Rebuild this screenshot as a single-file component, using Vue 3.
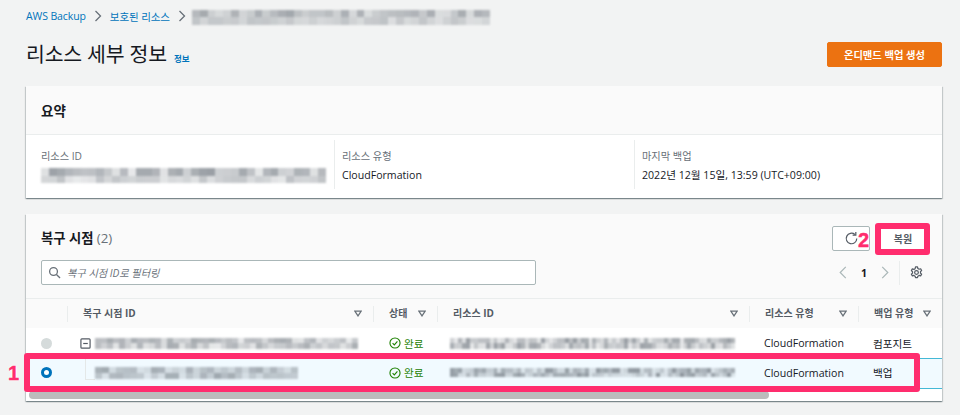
<script setup>
function mosaic(seed, width, cell, dark, light) {
  const cells = []
  let s = seed
  const count = Math.ceil(width / cell)
  for (let r = 0; r < 2; r++) {
    for (let c = 0; c < count; c++) {
      s = (s * 9301 + 49297) % 233280
      const v = s / 233280
      const fade = r === 0 ? dark : light
      cells.push(+(0.14 + v * fade).toFixed(2))
    }
  }
  return { cells, count }
}
const blurs = {
  crumb: mosaic(11, 298, 8, 0.42, 0.22),
  summary: mosaic(23, 285, 8, 0.5, 0.26),
  row1: mosaic(37, 263, 6, 0.42, 0.4),
  row2: mosaic(41, 203, 7, 0.42, 0.42),
  res1: mosaic(53, 285, 4, 0.5, 0.5),
  res2: mosaic(67, 285, 4, 0.55, 0.55)
}
const columns = [
  { label: '복구 시점 ID' },
  { label: '상태' },
  { label: '리소스 ID' },
  { label: '리소스 유형' },
  { label: '백업 유형' }
]
</script>

<template>
  <div class="page">
    <nav class="crumbs">
      <a class="link">AWS Backup</a>
      <svg class="sep" viewBox="0 0 8 12"><path d="M1.5 1 6.5 6 1.5 11" /></svg>
      <a class="link">보호된 리소스</a>
      <svg class="sep" viewBox="0 0 8 12"><path d="M1.5 1 6.5 6 1.5 11" /></svg>
      <div class="mosaic crumb-blur" :style="{ gridTemplateColumns: `repeat(${blurs.crumb.count}, 1fr)` }">
        <i v-for="(o, i) in blurs.crumb.cells" :key="i" :style="{ opacity: o }"></i>
      </div>
    </nav>

    <header class="title-row">
      <div class="title-left">
        <h1>리소스 세부 정보</h1>
        <a class="info">정보</a>
      </div>
      <button class="primary">온디맨드 백업 생성</button>
    </header>

    <section class="card summary">
      <div class="summary-head"><h2>요약</h2></div>
      <div class="summary-body">
        <div class="cell first">
          <div class="key">리소스 ID</div>
          <div class="mosaic summary-blur" :style="{ gridTemplateColumns: `repeat(${blurs.summary.count}, 1fr)` }">
            <i v-for="(o, i) in blurs.summary.cells" :key="i" :style="{ opacity: o }"></i>
          </div>
        </div>
        <div class="cell">
          <div class="key">리소스 유형</div>
          <div class="val">CloudFormation</div>
        </div>
        <div class="cell">
          <div class="key">마지막 백업</div>
          <div class="val">2022년 12월 15일, 13:59 (UTC+09:00)</div>
        </div>
      </div>
    </section>

    <section class="card points">
      <div class="points-head">
        <div class="points-top">
          <h2>복구 시점 <span class="count">(2)</span></h2>
          <div class="actions">
            <button class="ghost icon-btn" aria-label="새로 고침">
              <svg viewBox="0 0 16 16" width="15" height="15"><path d="M13.6 8a5.6 5.6 0 1 1-2-4.3" /><path d="M12.6 1v3.4H9.2" /></svg>
            </button>
            <button class="ghost restore">복원</button>
          </div>
        </div>
        <div class="points-tools">
          <div class="search">
            <svg viewBox="0 0 16 16" width="13" height="13"><circle cx="6.8" cy="6.8" r="4.8" /><path d="m10.4 10.4 4.4 4.4" /></svg>
            <span>복구 시점 ID로 필터링</span>
          </div>
          <div class="pager">
            <svg class="chev" viewBox="0 0 8 14"><path d="M7 1 1 7l6 6" /></svg>
            <b>1</b>
            <svg class="chev" viewBox="0 0 8 14"><path d="m1 1 6 6-6 6" /></svg>
            <span class="pager-sep"></span>
            <svg class="gear" viewBox="0 0 16 16" width="13" height="13">
              <circle cx="8" cy="8" r="2.3" />
              <path d="M6.8 1.2h2.4l.5 1.9 1.5.9 1.9-.6 1.2 2.1-1.4 1.4v1.8l1.4 1.4-1.2 2.1-1.9-.6-1.5.9-.5 1.9H6.8l-.5-1.9-1.5-.9-1.9.6-1.2-2.1 1.4-1.4V7.1L1.7 5.7l1.2-2.1 1.9.6 1.5-.9z" />
            </svg>
          </div>
        </div>
      </div>

      <div class="table">
        <div class="tr thead">
          <div class="th radio-col"></div>
          <div v-for="col in columns" :key="col.label" class="th">
            <span>{{ col.label }}</span>
            <svg class="sort" viewBox="0 0 10 8" width="8" height="7"><path d="M1 1h8L5 7z" /></svg>
          </div>
        </div>
        <div class="tr row-a">
          <div class="td radio-col"><span class="radio off"></span></div>
          <div class="td id-col">
            <svg class="minus" viewBox="0 0 12 12" width="11" height="11"><rect x="1" y="1" width="10" height="10" rx="1" /><path d="M3.5 6h5" /></svg>
            <div class="mosaic id-blur" :style="{ gridTemplateColumns: `repeat(${blurs.row1.count}, 1fr)` }">
              <i v-for="(o, i) in blurs.row1.cells" :key="i" :style="{ opacity: o }"></i>
            </div>
          </div>
          <div class="td status">
            <svg viewBox="0 0 14 14" width="12" height="12"><circle cx="7" cy="7" r="5.9" /><path d="m4.2 7.2 2 2 3.6-4" /></svg>
            <span>완료</span>
          </div>
          <div class="td">
            <div class="mosaic res-blur" :style="{ gridTemplateColumns: `repeat(${blurs.res1.count}, 1fr)` }">
              <i v-for="(o, i) in blurs.res1.cells" :key="i" :style="{ opacity: o }"></i>
            </div>
          </div>
          <div class="td">CloudFormation</div>
          <div class="td">컴포지트</div>
        </div>
        <div class="tr row-b">
          <div class="td radio-col"><span class="radio on"></span></div>
          <div class="td id-col nested">
            <span class="tree"></span>
            <div class="mosaic id-blur short" :style="{ gridTemplateColumns: `repeat(${blurs.row2.count}, 1fr)` }">
              <i v-for="(o, i) in blurs.row2.cells" :key="i" :style="{ opacity: o }"></i>
            </div>
          </div>
          <div class="td status">
            <svg viewBox="0 0 14 14" width="12" height="12"><circle cx="7" cy="7" r="5.9" /><path d="m4.2 7.2 2 2 3.6-4" /></svg>
            <span>완료</span>
          </div>
          <div class="td">
            <div class="mosaic res-blur thin" :style="{ gridTemplateColumns: `repeat(${blurs.res2.count}, 1fr)` }">
              <i v-for="(o, i) in blurs.res2.cells" :key="i" :style="{ opacity: o }"></i>
            </div>
          </div>
          <div class="td">CloudFormation</div>
          <div class="td">백업</div>
        </div>
        <div class="scroll-track"><div class="scroll-thumb"></div></div>
      </div>
    </section>

    <div class="mark mark-row"></div>
    <div class="mark mark-btn"></div>
    <span class="num num-1">1</span>
    <span class="num num-2">2</span>
  </div>
</template>

<style>
html, body { margin: 0; background: #f2f3f3; }
</style>

<style scoped>
.page {
  position: relative;
  width: 960px;
  height: 415px;
  overflow: hidden;
  box-sizing: border-box;
  padding: 0 18px 0 26px;
  background: #f2f3f3;
  color: #16191f;
  font-family: "Open Sans", "Noto Sans CJK KR", sans-serif;
  font-size: 10.6px;
  -webkit-font-smoothing: antialiased;
}
h1, h2 { margin: 0; font-weight: 400; }
button { font-family: inherit; cursor: pointer; }
.mosaic { display: grid; filter: blur(1.3px); }
.mosaic i { display: block; background: #5f6770; }

.crumbs { display: flex; align-items: center; height: 32px; }
.link { color: #0073bb; font-size: 10.5px; letter-spacing: -0.1px; }
.sep { width: 8px; height: 12px; margin: 0 8px 0 8px; fill: none; stroke: #687078; stroke-width: 1.3; }
.crumb-blur { width: 298px; height: 15px; margin: 2px 0 0 -2px; }

.title-row { display: flex; justify-content: space-between; align-items: center; height: 40px; margin-top: 2px; }
.title-left { display: flex; align-items: baseline; margin-top: -1px; }
h1 { font-size: 20.5px; line-height: 28px; letter-spacing: -0.2px; }
.info { margin-left: 7px; font-size: 8.5px; color: #0073bb; font-weight: 700; }
.primary {
  width: 115px; height: 25px; padding: 0; border: 1px solid #ec7211; border-radius: 2px;
  background: #ec7211; color: #fff; font-size: 10.3px; font-weight: 700; margin-top: 0;
}

.card { background: #fff; box-shadow: 0 1px 1px 0 rgba(0,28,36,.3), 1px 1px 1px 0 rgba(0,28,36,.15), -1px 1px 1px 0 rgba(0,28,36,.15); }
.summary { margin-top: 12px; height: 112px; }
.summary-head { height: 49px; box-sizing: border-box; padding-left: 15px; display: flex; align-items: center; background: #fafafa; border-bottom: 1px solid #eaeded; }
.summary-head h2 { font-size: 13.5px; font-weight: 700; }
.summary-body { display: grid; grid-template-columns: 308px 300px 1fr; padding-top: 5px; }
.cell { height: 49px; padding: 9px 0 0 7px; box-sizing: border-box; border-left: 1px solid #eaeded; }
.cell.first { border-left: 0; padding-left: 15px; }
.key { color: #687078; font-size: 10.2px; line-height: 14px; }
.val { margin-top: 5px; font-size: 10.6px; line-height: 15px; }
.summary-blur { width: 285px; height: 15px; margin-top: 5px; }

.points { margin-top: 16px; height: 187px; }
.points-head { height: 84px; box-sizing: border-box; padding: 12px 11px 0 15px; background: #fafafa; }
.points-top { display: flex; justify-content: space-between; align-items: center; height: 25px; }
.points-top h2 { font-size: 13.3px; font-weight: 700; margin-top: -3px; }
.count { color: #687078; font-weight: 400; }
.actions { display: flex; gap: 11px; margin-right: 6px; }
.ghost { height: 25px; padding: 0; border: 1px solid #aab7b8; border-radius: 2px; background: #fff; color: #545b64; font-size: 10px; font-weight: 700; }
.icon-btn { width: 38px; display: flex; align-items: center; justify-content: center; padding-right: 0; }
.icon-btn svg { fill: none; stroke: #545b64; stroke-width: 1.3; }
.restore { width: 44px; border: 0; }
.points-tools { display: flex; justify-content: space-between; align-items: center; margin-top: 9px; }
.search {
  width: 495px; height: 25px; box-sizing: border-box; padding-left: 6px; display: flex; align-items: center; gap: 6px;
  background: #fff; border: 1px solid #aab7b8; border-radius: 2px;
  color: #687078; font-style: italic; font-size: 10.2px;
}
.search svg { fill: none; stroke: #687078; stroke-width: 1.6; }
.pager { display: flex; align-items: center; height: 24px; margin-right: 8px; }
.pager b { width: 34px; text-align: center; font-size: 10.5px; }
.chev { width: 8px; height: 13px; fill: none; stroke: #aab7b8; stroke-width: 1.3; }
.pager-sep { width: 1px; height: 24px; margin: 0 10px 0 10px; background: #eaeded; }
.gear { fill: none; stroke: #545b64; stroke-width: 1.5; stroke-linejoin: round; }

.table { font-size: 10.6px; }
.tr { display: grid; grid-template-columns: 41px 306px 64px 312px 109px 84px; align-items: center; }
.thead { height: 30px; background: #fafafa; border-top: 1px solid #eaeded; box-sizing: border-box; color: #545b64; font-weight: 700; font-size: 10px; }
.th { height: 16px; display: flex; align-items: center; justify-content: space-between; padding: 0 11px 0 15px; box-sizing: border-box; border-left: 1px solid #eaeded; }
.th span { margin-top: -2px; }
.th.radio-col { border-left: 0; }
.sort { fill: none; stroke: #687078; stroke-width: 1.6; flex: none; }
.td { padding-left: 15px; box-sizing: border-box; }
.row-a { height: 31px; }
.row-a .td { padding-bottom: 1px; }
.row-b { height: 29px; background: #f1faff; border-top: 1px solid #44b9d6; border-bottom: 1px solid #44b9d6; box-sizing: content-box; margin-top: -1px; }
.row-b .td { padding-bottom: 2px; }
.radio-col { padding-left: 15px; border: 0; }
.radio { display: block; width: 11px; height: 11px; border-radius: 50%; box-sizing: border-box; }
.radio.off { background: #d5dbdb; }
.radio.on { background: #fff; border: 3px solid #0073bb; }
.id-col { display: flex; align-items: center; padding-left: 13px; position: relative; }
.minus { flex: none; fill: none; stroke: #545b64; stroke-width: 1.3; }
.id-blur { width: 263px; height: 11px; margin-left: 4px; }
.id-blur.short { width: 203px; height: 12px; margin-left: 15px; }
.tree { position: absolute; left: 18px; top: -9px; width: 9px; height: 21px; border-left: 1px solid #e4e8e8; border-bottom: 1px solid #e4e8e8; }
.status { display: flex; align-items: center; gap: 3px; color: #1d8102; padding-left: 16px; }
.status svg { fill: none; stroke: #1d8102; stroke-width: 1.3; }
.res-blur { width: 285px; height: 11px; margin-left: -2px; }
.res-blur.thin { height: 9px; }
.scroll-track { height: 13px; padding: 2px 0 0 3px; box-sizing: border-box; }
.scroll-thumb { width: 740px; height: 8px; border-radius: 4px; background: #bcbcbc; }

.mark { position: absolute; box-sizing: border-box; border: 6px solid #ff2d6e; border-radius: 3px; }
.mark-row { left: 24px; top: 353px; width: 896px; height: 39px; }
.mark-btn { left: 875px; top: 223px; width: 55px; height: 32px; }
.num {
  position: absolute; color: #ff2d6e; font-family: "Liberation Sans", sans-serif; font-weight: 700; font-size: 20px; line-height: 20px;
  -webkit-text-stroke: 0.4px #ff2d6e;
  text-shadow: 0 0 2px #fff, 0 0 2px #fff, 0 0 3px #fff;
}
.num-1 { left: 8px; top: 363px; }
.num-2 { left: 858px; top: 230px; }
</style>
